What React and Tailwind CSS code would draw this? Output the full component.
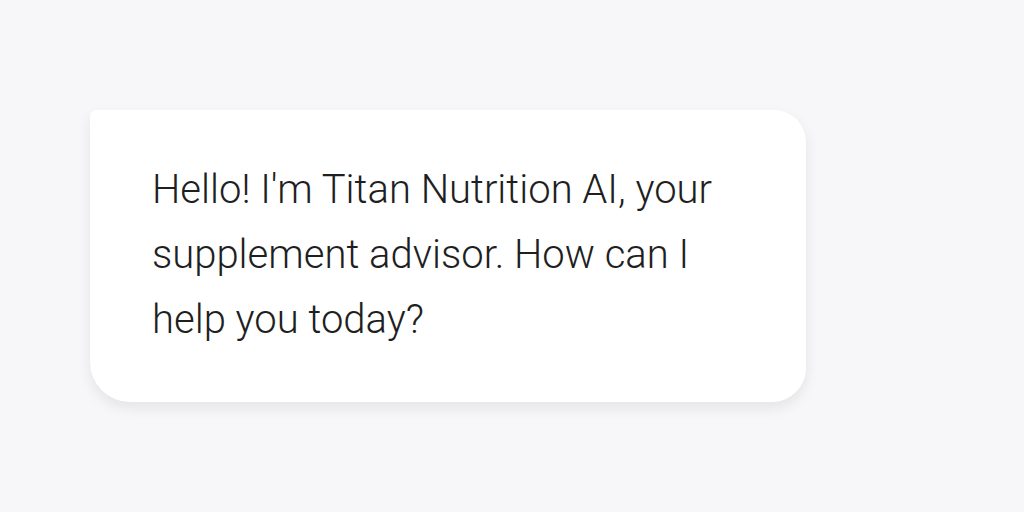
export default function App() {
  return (
    <div className="min-h-screen w-full bg-[#f7f7f9] pt-[110px] pl-[90px]" style={{ fontFamily: 'Roboto, "Liberation Sans", sans-serif' }}>
      <div className="w-[716px] rounded-tl-[6px] rounded-tr-[32px] rounded-br-[34px] rounded-bl-[40px] bg-white pl-[62px] pr-[40px] pt-[47px] pb-[50px] shadow-[0_6px_14px_rgba(0,0,0,0.08)]">
        <p className="text-[40px] leading-[65px] font-light text-[#1f1f1f] w-[590px]">
          Hello! I'm Titan Nutrition AI, your supplement advisor. How can I help you today?
        </p>
      </div>
    </div>
  );
}
